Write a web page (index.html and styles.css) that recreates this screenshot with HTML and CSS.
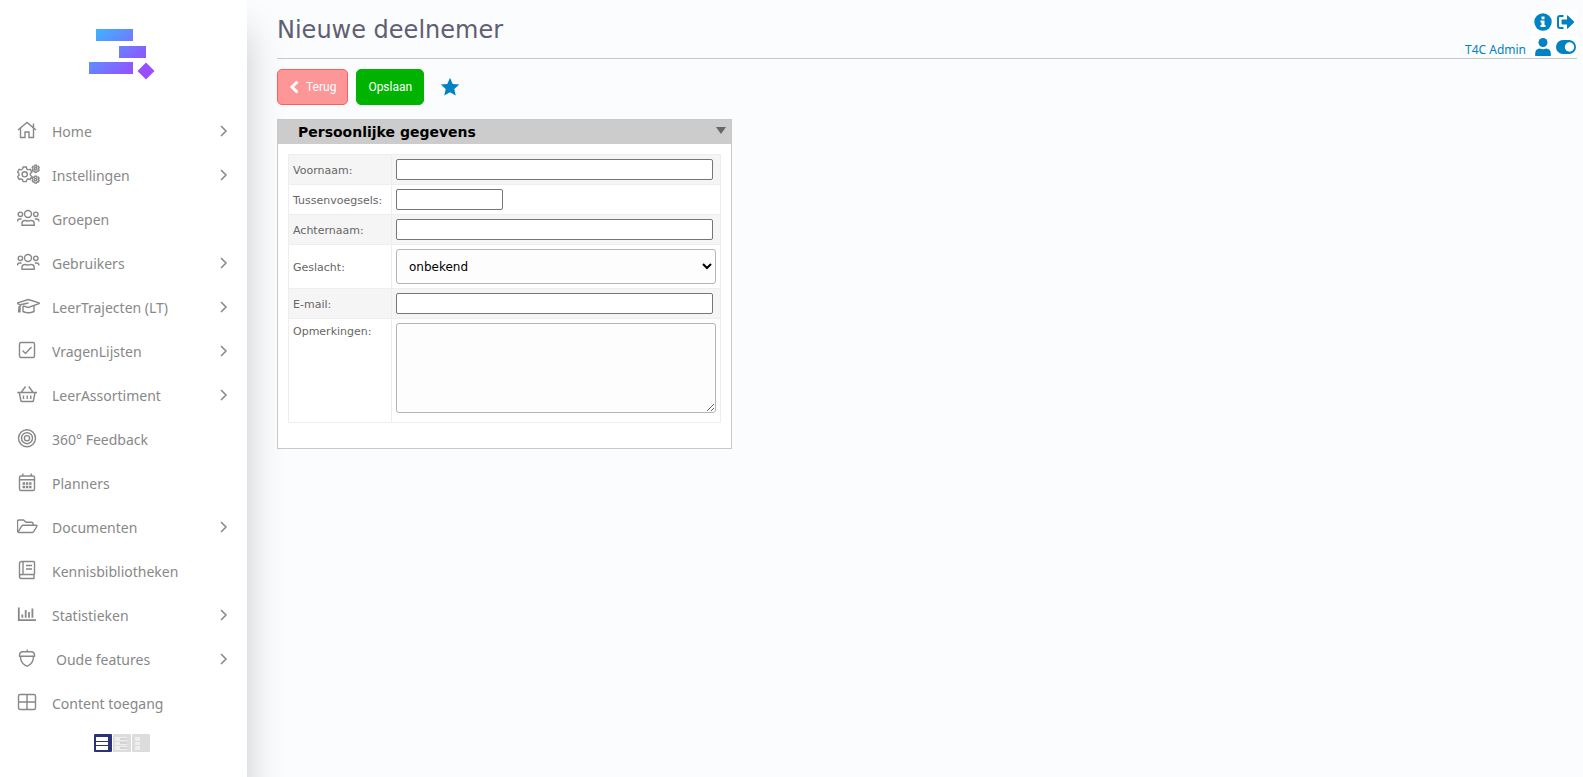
FILE: index.html
```html
<!DOCTYPE html>
<html lang="nl">
<head>
<meta charset="utf-8">
<title>Nieuwe deelnemer</title>
<link rel="stylesheet" href="styles.css">
</head>
<body>
  <svg class="defs" aria-hidden="true">
    <defs>
      <path id="tooth" d="M-2.1-5.3L-1.6-7.3H1.6L2.1-5.3L3.54-4.47" vector-effect="non-scaling-stroke"/>
      <g id="gear">
        <use href="#tooth"/>
        <use href="#tooth" transform="rotate(60)"/>
        <use href="#tooth" transform="rotate(120)"/>
        <use href="#tooth" transform="rotate(180)"/>
        <use href="#tooth" transform="rotate(240)"/>
        <use href="#tooth" transform="rotate(300)"/>
        <circle r="2.6" vector-effect="non-scaling-stroke"/>
      </g>
      <g id="users">
        <circle cx="11" cy="6" r="3.5"/>
        <circle cx="3.4" cy="6.3" r="2.2"/>
        <circle cx="18.8" cy="6.3" r="2.2"/>
        <path d="M5 17.3V15.5a3 3 0 0 1 3-3c1 0 1.5 .5 3.2 .5s2-.5 3-.5a3 3 0 0 1 3 3v1.8zM.6 13.5v-.5a2 2 0 0 1 2-2h2M21.8 13.5v-.5a2 2 0 0 0-2-2h-2"/>
      </g>
    </defs>
  </svg>

  <aside class="sidebar">
    <a class="logo" href="#" aria-label="Home">
      <svg width="66" height="52" viewBox="0 0 66 52">
        <defs>
          <linearGradient id="logoFill" gradientUnits="userSpaceOnUse" x1="10" y1="0" x2="52" y2="48">
            <stop offset="0" stop-color="#41b0ff"/>
            <stop offset="0.75" stop-color="#8a5cff"/>
            <stop offset="1" stop-color="#9a4cff"/>
          </linearGradient>
        </defs>
        <g fill="url(#logoFill)">
          <rect x="7" y="0" width="37" height="12"/>
          <rect x="30" y="17" width="27" height="12"/>
          <rect x="0" y="33" width="44" height="12"/>
          <path d="M57 33.5L65.5 42L57 50.5L48.5 42z"/>
        </g>
      </svg>
    </a>

    <nav>
      <ul class="menu">
        <li><a href="#"><svg class="icon" viewBox="0 0 24 24"><path d="M1 10L10 2.5L19 10M3.5 8V17.5H8V12h4v5.5h4.5V8M16.5 3.5V7.5"/></svg>Home<svg class="arrow" viewBox="0 0 8 12"><path d="M1 1l5 5-5 5"/></svg></a></li>
        <li><a href="#"><svg class="icon" viewBox="0 0 24 24"><use href="#gear" transform="translate(7.7 10.3)"/><use href="#gear" transform="translate(18.7 4.8) scale(.48)"/><use href="#gear" transform="translate(18.7 15.6) scale(.48)"/></svg>Instellingen<svg class="arrow" viewBox="0 0 8 12"><path d="M1 1l5 5-5 5"/></svg></a></li>
        <li><a href="#"><svg class="icon" viewBox="0 0 24 24"><use href="#users"/></svg>Groepen</a></li>
        <li><a href="#"><svg class="icon" viewBox="0 0 24 24"><use href="#users"/></svg>Gebruikers<svg class="arrow" viewBox="0 0 8 12"><path d="M1 1l5 5-5 5"/></svg></a></li>
        <li><a href="#"><svg class="icon" viewBox="0 0 24 24"><path d="M11.3 3.5L22 6.8q.8 .4 0 .9L11.3 11.5L6 9.8M11.3 3.5L.8 6.8q-.6 .4 0 .9L3.5 9M11.5 7L4.5 8.5q-1.5 .4-1.5 2V16.5M1.5 16.5L2.2 10M6 10V15.5q5.3 2.5 11 0V10"/></svg>LeerTrajecten (LT)<svg class="arrow" viewBox="0 0 8 12"><path d="M1 1l5 5-5 5"/></svg></a></li>
        <li><a href="#"><svg class="icon" viewBox="0 0 24 24"><rect x="2.5" y="2.5" width="15" height="15" rx="1.5"/><path d="M5.5 10.5l3 3 6-6.5"/></svg>VragenLijsten<svg class="arrow" viewBox="0 0 8 12"><path d="M1 1l5 5-5 5"/></svg></a></li>
        <li><a href="#"><svg class="icon" viewBox="0 0 24 24"><path d="M.3 8.5H20M2.3 8.5L3.8 16.5q.2 1 1.2 1H15.3q1 0 1.2-1L18 8.5M4.5 8L8.5 2.5M15.8 8L11.8 2.5M6.5 11.5v3.5M10.2 11.5v3.5M13.8 11.5v3.5"/></svg>LeerAssortiment<svg class="arrow" viewBox="0 0 8 12"><path d="M1 1l5 5-5 5"/></svg></a></li>
        <li><a href="#"><svg class="icon" viewBox="0 0 24 24"><circle cx="10" cy="10.2" r="8.5"/><circle cx="10" cy="10.2" r="5.5"/><circle cx="10" cy="10.2" r="2.6"/></svg>360° Feedback</a></li>
        <li><a href="#"><svg class="icon" viewBox="0 0 24 24"><rect x="2.5" y="4" width="15" height="14.5" rx="1.5"/><path d="M2.5 7.7h15M5.8 1.5V4M14.2 1.5V4"/><path class="dots" d="M5.5 11.5h9M5.5 15h9"/></svg>Planners</a></li>
        <li><a href="#"><svg class="icon" viewBox="0 0 24 24"><path d="M.5 15V5.5q0-1.5 1.5-1.5H6.5L9 6.3H14.5q1.5 0 1.5 1.5V9.3M.7 16.5L4.5 10.3q.6-1 1.7-1H19q1.5 0 .8 1.2L16.7 15.6q-.6 .9-1.7 .9H2q-1.5 0-1.5-1.5"/></svg>Documenten<svg class="arrow" viewBox="0 0 8 12"><path d="M1 1l5 5-5 5"/></svg></a></li>
        <li><a href="#"><svg class="icon" viewBox="0 0 24 24"><path d="M17.5 14.5V2.5q0-1-1-1H4.5q-2 0-2 2V16.5q0 2 2 2H17.5M17 14.5v4M17.5 14.5H4.5q-2 0-2 2M6 1.5V14.5M9 5.5h6M9 9h6"/></svg>Kennisbibliotheken</a></li>
        <li><a href="#"><svg class="icon" viewBox="0 0 24 24"><path class="thick" d="M1.8 3.5V16.2H19M5.3 10.5V13.8M8.7 6V13.8M12 8V13.8M15.4 4.5V13.8"/></svg>Statistieken<svg class="arrow" viewBox="0 0 8 12"><path d="M1 1l5 5-5 5"/></svg></a></li>
        <li><a href="#"><svg class="icon" viewBox="0 0 24 24"><path d="M2.5 8.3V7q0-3.2 3.5-3.2H14q3.5 0 3.5 3.2V8.3zM10 3.8q0-1.5 .5-2.3M3.5 8.5q0 6 4.5 8.7l2 1.1l2-1.1q4.5-2.7 4.5-8.7"/></svg><span class="indent">Oude features</span><svg class="arrow" viewBox="0 0 8 12"><path d="M1 1l5 5-5 5"/></svg></a></li>
        <li><a href="#"><svg class="icon" viewBox="0 0 24 24"><rect x="1.5" y="2.5" width="17" height="15" rx="1.5"/><path d="M10 2.5v15M1.5 10h17"/></svg>Content toegang</a></li>
      </ul>
    </nav>

    <div class="modes">
      <button class="mode active" type="button" aria-label="Menu breed"><svg viewBox="0 0 18 18"><path d="M2 3h12v4H2zM2 8h12v3H2zM2 12h12v4H2z"/></svg></button>
      <button class="mode" type="button" aria-label="Menu normaal"><svg viewBox="0 0 18 18"><path d="M2 3h12v4H2zM2 8h12v3H2zM2 12h12v4H2z"/><path fill="#d4d4d4" d="M7 4h7v2H7zM7 8h7v2H7zM7 13h7v2H7z"/></svg></button>
      <button class="mode" type="button" aria-label="Menu smal"><svg viewBox="0 0 18 18"><path d="M3 3h5v4H3zM3 8h5v3H3zM3 12h5v4H3z"/></svg></button>
    </div>
  </aside>

  <main>
    <header class="page-header">
      <h1>Nieuwe deelnemer</h1>
      <div class="user">
        <a class="user-name" href="#">T4C Admin</a>
        <div class="tools">
          <a href="#" aria-label="Info"><svg width="18" height="18" viewBox="0 0 18 18"><circle cx="9" cy="9" r="8.7"/><path fill="#fff" d="M7.5 3.5h3v2.8h-3zM6.5 7.5h4v4.5h1v2h-5v-2h1V9.5h-1z"/></svg></a>
          <a href="#" aria-label="Uitloggen"><svg width="20" height="18" viewBox="0 0 20 18"><path d="M6.5 6.5h4.5V2.8q0-1 .8-.3l6 5.8q.6 .7 0 1.4l-6 5.8q-.8 .7-.8-.3V11.5H6.5q-1 0-1-1V7.500q0-1 1-1z"/><path fill="none" stroke="#0082c3" stroke-width="2" d="M7.5 3H4Q2 3 2 5v8q0 2 2 2h3.5"/></svg></a>
          <a href="#" aria-label="Profiel"><svg width="18" height="18" viewBox="0 0 18 18"><circle cx="9" cy="4.5" r="4.5"/><path d="M1.2 18v-2.5q0-4.5 4.5-5q3.3 1.3 6.6 0q4.5 .5 4.5 5V18z"/></svg></a>
          <a href="#" aria-label="Wisselen"><svg width="20" height="18" viewBox="0 0 20 18"><rect x="0" y="2" width="20" height="14" rx="7"/><circle cx="13.5" cy="9" r="4.7" fill="#fff"/></svg></a>
        </div>
      </div>
    </header>

    <div class="actions">
      <button class="btn back" type="button"><svg width="10" height="14" viewBox="0 0 10 14"><path d="M8.5 1.5L3 7L8.5 12.5"/></svg>Terug</button>
      <button class="btn save" type="submit" form="participant">Opslaan</button>
      <a class="favorite" href="#" aria-label="Favoriet"><svg width="20" height="20" viewBox="0 0 20 20"><path d="M10 .8L12.7 6.9L19.3 7.5L14.3 12L15.7 18.5L10 15.2L4.3 18.5L5.7 12L.7 7.5L7.3 6.9z"/></svg></a>
    </div>

    <section class="panel">
      <div class="panel-head">
        <h2>Persoonlijke gegevens</h2>
        <button class="toggle" type="button" aria-label="Inklappen"></button>
      </div>
      <form id="participant" class="panel-body">
        <table class="fields">
          <tr>
            <th><label for="firstName">Voornaam:</label></th>
            <td><input id="firstName" type="text"></td>
          </tr>
          <tr>
            <th><label for="infix">Tussenvoegsels:</label></th>
            <td><input id="infix" class="short" type="text"></td>
          </tr>
          <tr>
            <th><label for="lastName">Achternaam:</label></th>
            <td><input id="lastName" type="text"></td>
          </tr>
          <tr>
            <th><label for="gender">Geslacht:</label></th>
            <td>
              <select id="gender">
                <option>onbekend</option>
                <option>man</option>
                <option>vrouw</option>
              </select>
            </td>
          </tr>
          <tr>
            <th><label for="email">E-mail:</label></th>
            <td><input id="email" type="email"></td>
          </tr>
          <tr class="remarks">
            <th><label for="remarks">Opmerkingen:</label></th>
            <td><textarea id="remarks"></textarea></td>
          </tr>
        </table>
      </form>
    </section>
  </main>
</body>
</html>
```
FILE: styles.css
```css
* {
  box-sizing: border-box;
}

body {
  margin: 0;
  min-height: 100vh;
  display: flex;
  background: #fbfcfe;
  font-family: "DejaVu Sans", Verdana, sans-serif;
  font-size: 11px;
  color: #666;
}

a {
  color: #0082c3;
  text-decoration: none;
}

.defs {
  position: absolute;
  width: 0;
  height: 0;
}

/* sidebar */
.sidebar {
  width: 247px;
  flex: none;
  background: #fff;
  box-shadow: 0 30px 35px rgba(0, 0, 0, 0.2);
}

.logo {
  display: flex;
  justify-content: center;
  height: 109px;
  padding: 29px 4px 0 0;
}

.menu {
  list-style: none;
  margin: 0;
  padding: 0;
}

.menu a {
  display: flex;
  align-items: center;
  height: 44px;
  padding: 0 19px 0 17px;
  font-family: "Noto Sans", "Segoe UI", sans-serif;
  font-size: 14px;
  color: #888;
}

.icon {
  width: 24px;
  height: 24px;
  margin: 2px 11px 0 0;
  fill: none;
  stroke: #888;
  stroke-width: 1.4;
}

.icon .dots {
  stroke-width: 2.5;
  stroke-dasharray: 2.5 0.8;
}

.icon .thick {
  stroke-width: 1.8;
}

.arrow {
  width: 8px;
  height: 12px;
  margin-left: auto;
  fill: none;
  stroke: #888;
  stroke-width: 1.5;
}

.indent {
  padding-left: 4px;
}

.modes {
  display: flex;
  justify-content: center;
  gap: 1px;
  padding: 9px 4px 24px 0;
}

.mode {
  width: 18px;
  height: 18px;
  padding: 0;
  border: 0;
  border-radius: 1px;
  background: #dcdcdc;
  cursor: pointer;
}

.mode svg {
  display: block;
  fill: #eee;
}

.mode.active {
  background: #2b3278;
}

.mode.active svg {
  fill: #fff;
}

/* page header */
main {
  flex: 1;
  padding: 0 6px 0 30px;
}

.page-header {
  display: flex;
  justify-content: space-between;
  height: 59px;
  border-bottom: 1px solid #c8c8cb;
}

h1 {
  margin: 0;
  padding-top: 15px;
  font-size: 24px;
  line-height: 30px;
  font-weight: normal;
  color: #5f5f73;
}

.user {
  display: flex;
  align-items: flex-end;
  gap: 5px;
}

.user-name {
  font: 12px/16px "Noto Sans", sans-serif;
}

.tools {
  display: grid;
  grid-template-columns: 23px 23px;
  grid-auto-rows: 23px;
  row-gap: 2px;
}

.tools a {
  display: flex;
  align-items: center;
  justify-content: center;
  background: #fff;
}

.tools svg {
  fill: #0082c3;
}

/* buttons */
.actions {
  display: flex;
  align-items: center;
  gap: 8px;
  padding: 10px 0 14px;
}

.btn {
  height: 36px;
  padding: 0 11px;
  border: 1px solid;
  border-radius: 5px;
  font: 12px Roboto, sans-serif;
  color: #fff;
  cursor: pointer;
}

.back {
  display: flex;
  align-items: center;
  gap: 7px;
  background: #fd9797;
  border-color: #ff5c5c;
}

.back svg {
  fill: none;
  stroke: #fff;
  stroke-width: 3;
}

.save {
  background: #00b300;
  border-color: #00b300;
}

.favorite {
  display: flex;
  margin-left: 8px;
}

.favorite svg {
  fill: #0082c3;
}

/* panel */
.panel {
  width: 455px;
  max-width: 100%;
  border: 1px solid #c8c8c8;
  background: #fff;
}

.panel-head {
  display: flex;
  align-items: center;
  justify-content: space-between;
  height: 24px;
  padding: 0 5px 0 20px;
  background: #ccc;
}

h2 {
  margin: 0;
  font-size: 14px;
  color: #000;
}

.toggle {
  margin-bottom: 4px;
  padding: 0;
  border: 5px solid transparent;
  border-top: 7px solid #666;
  border-bottom: 0;
  background: none;
  cursor: pointer;
}

.panel-body {
  padding: 10px 10px 25px;
}

.fields {
  width: 100%;
  border-collapse: collapse;
}

.fields tr:nth-child(odd) {
  background: #f5f5f5;
}

.fields th,
.fields td {
  height: 30px;
  padding: 4px;
  border: 1px solid #eee;
  text-align: left;
  font-weight: normal;
}

.fields th {
  width: 103px;
  padding-top: 6px;
}

.fields input,
.fields select,
.fields textarea {
  display: block;
  width: 100%;
}

.fields input {
  width: 317px;
  height: 21px;
  border: 1px solid #767676;
  border-radius: 2px;
}

.fields .short {
  width: 107px;
}

.fields select,
.fields textarea {
  border: 1px solid #b5b5b5;
  border-radius: 3px;
  background: #fdfdfd;
}

.fields select {
  height: 35px;
  padding: 0 0 0 8px;
  font: 12px "DejaVu Sans", Verdana, sans-serif;
  color: #000;
}

.fields textarea {
  height: 90px;
}

.fields .remarks th,
.fields .remarks td {
  height: 104px;
  vertical-align: top;
}
```
